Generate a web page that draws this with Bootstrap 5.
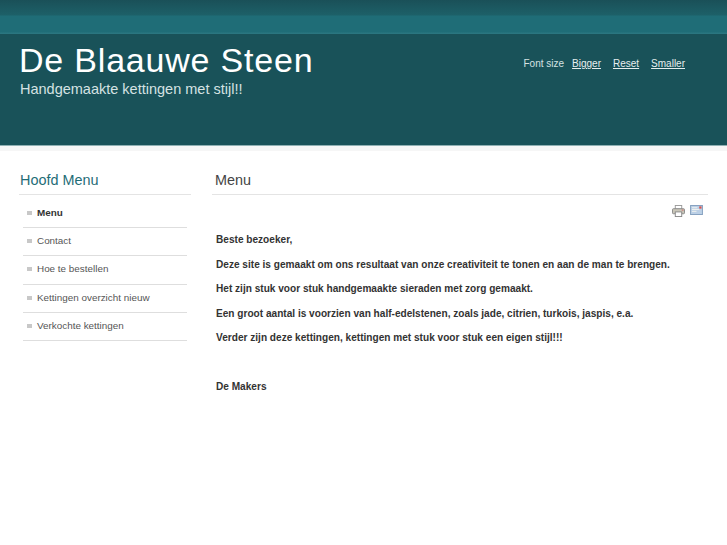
<!DOCTYPE html>
<html lang="nl">
<head>
    <meta charset="UTF-8">
    <meta name="viewport" content="width=device-width, initial-scale=1.0">
    <title>De Blaauwe Steen</title>
    <link href="https://cdn.jsdelivr.net/npm/bootstrap@5.3.0/dist/css/bootstrap.min.css" rel="stylesheet">
    <style>
        body {
            font-family: "Liberation Sans", Arial, sans-serif;
            font-size: 10px;
            color: #333;
            background-color: #fff;
        }

        .top-strip {
            height: 34px;
            background: linear-gradient(#1a5058 0, #1d6068 15px, #1f6d77 16px, #1f6d77 32px, #2a7680 33px);
        }

        .site-head {
            height: 112px;
            background-color: #195259;
            padding: 7px 20px 0 19px;
            border-bottom: 1px solid #8fb0b3;
        }

        .site-title {
            font-size: 34px;
            font-weight: 400;
            line-height: 39px;
            letter-spacing: 0.8px;
            color: #fff;
            margin: 0;
        }

        .site-slogan {
            font-size: 14.5px;
            line-height: 19px;
            color: #d5e2e3;
            margin-left: 1px;
        }

        .font-tools {
            padding-top: 16px;
            margin-right: 22px;
            color: #d5e2e3;
            line-height: 13px;
            font-size: 10px;
        }

        .font-tools a {
            color: #e6eeee;
        }

        .head-fade {
            height: 5px;
            background-color: #f6f6f6;
        }

        .page-body {
            padding: 20px 19px 0 19px;
        }

        .side-col {
            width: 172px;
            flex-shrink: 0;
        }

        .main-col {
            margin-left: 21px;
            flex-grow: 1;
        }

        .side-title {
            font-size: 14.4px;
            line-height: 19px;
            font-weight: 400;
            color: #1f6d77;
            margin: 0;
            padding: 0 0 4px 1px;
            border-bottom: 1px solid #e4e4e4;
        }

        .side-menu {
            list-style: none;
            margin: 5px 4px 0 4px;
            padding: 0;
        }

        .side-menu li {
            height: 28.2px;
            line-height: 26px;
            padding-left: 14px;
            border-bottom: 1px solid #dedede;
            color: #555;
            font-size: 9.9px;
            position: relative;
        }

        .side-menu li::before {
            content: "";
            position: absolute;
            left: 4px;
            top: 11px;
            width: 5px;
            height: 4px;
            background-color: #c8c8c8;
        }

        .side-menu li.active {
            font-weight: 700;
            color: #333;
        }

        .main-title {
            font-size: 14.4px;
            line-height: 19px;
            font-weight: 400;
            color: #444;
            margin: 0;
            padding: 0 0 4px 3px;
            border-bottom: 1px solid #e4e4e4;
        }

        .print-icons {
            height: 21px;
            padding: 10px 5px 0 0;
            gap: 5px;
            margin-bottom: 17px;
        }

        .article-text {
            padding-left: 4px;
            font-weight: 700;
            font-size: 10.1px;
            color: #333;
        }

        .article-text p {
            line-height: 14px;
            margin: 0 0 10.5px 0;
        }

        .article-text .gap-line {
            height: 24.5px;
        }
    </style>
</head>
<body>
    <!-- kop -->
    <div class="top-strip"></div>
    <div class="site-head d-flex justify-content-between">
        <div>
            <h1 class="site-title">De Blaauwe Steen</h1>
            <div class="site-slogan">Handgemaakte kettingen met stijl!!</div>
        </div>
        <div class="font-tools d-flex gap-2">
            <span>Font size</span>
            <a href="#" class="me-1">Bigger</a>
            <a href="#" class="me-1">Reset</a>
            <a href="#">Smaller</a>
        </div>
    </div>
    <div class="head-fade"></div>

    <div class="page-body d-flex">
        <div class="side-col">
            <h3 class="side-title">Hoofd Menu</h3>
            <ul class="side-menu">
                <li class="active">Menu</li>
                <li>Contact</li>
                <li>Hoe te bestellen</li>
                <li>Kettingen overzicht nieuw</li>
                <li>Verkochte kettingen</li>
            </ul>
        </div>
        <div class="main-col">
            <h2 class="main-title">Menu</h2>
            <div class="print-icons d-flex justify-content-end">
                <svg width="13" height="12" viewBox="0 0 14 13">
                    <rect x="3.5" y="0.5" width="7" height="4" fill="#fff" stroke="#999"/>
                    <rect x="0.5" y="4" width="13" height="5.5" rx="1" fill="#c9c6b8" stroke="#888"/>
                    <rect x="3.5" y="7.5" width="7" height="5" fill="#fff" stroke="#888"/>
                    <rect x="10.5" y="5" width="2" height="1" fill="#c66"/>
                </svg>
                <svg width="13" height="10" viewBox="0 0 14 11">
                    <rect x="0.5" y="0.5" width="13" height="10" fill="#bcd0e6" stroke="#7f9cbc"/>
                    <path d="M2 3h6M2 5h8M2 7h5" stroke="#f4f4f0" fill="none"/>
                    <rect x="10" y="1.5" width="2.5" height="2.5" fill="#d9534f"/>
                </svg>
            </div>
            <div class="article-text">
                <p>Beste bezoeker,</p>
                <p>Deze site is gemaakt om ons resultaat van onze creativiteit te tonen en aan de man te brengen.</p>
                <p>Het zijn stuk voor stuk handgemaakte sieraden met zorg gemaakt.</p>
                <p>Een groot aantal is voorzien van half-edelstenen, zoals jade, citrien, turkois, jaspis, e.a.</p>
                <p>Verder zijn deze kettingen, kettingen met stuk voor stuk een eigen stijl!!!</p>
                <div class="gap-line"></div>
                <p>De Makers</p>
            </div>
        </div>
    </div>

    <script src="https://cdn.jsdelivr.net/npm/bootstrap@5.3.0/dist/js/bootstrap.bundle.min.js"></script>
</body>
</html>
